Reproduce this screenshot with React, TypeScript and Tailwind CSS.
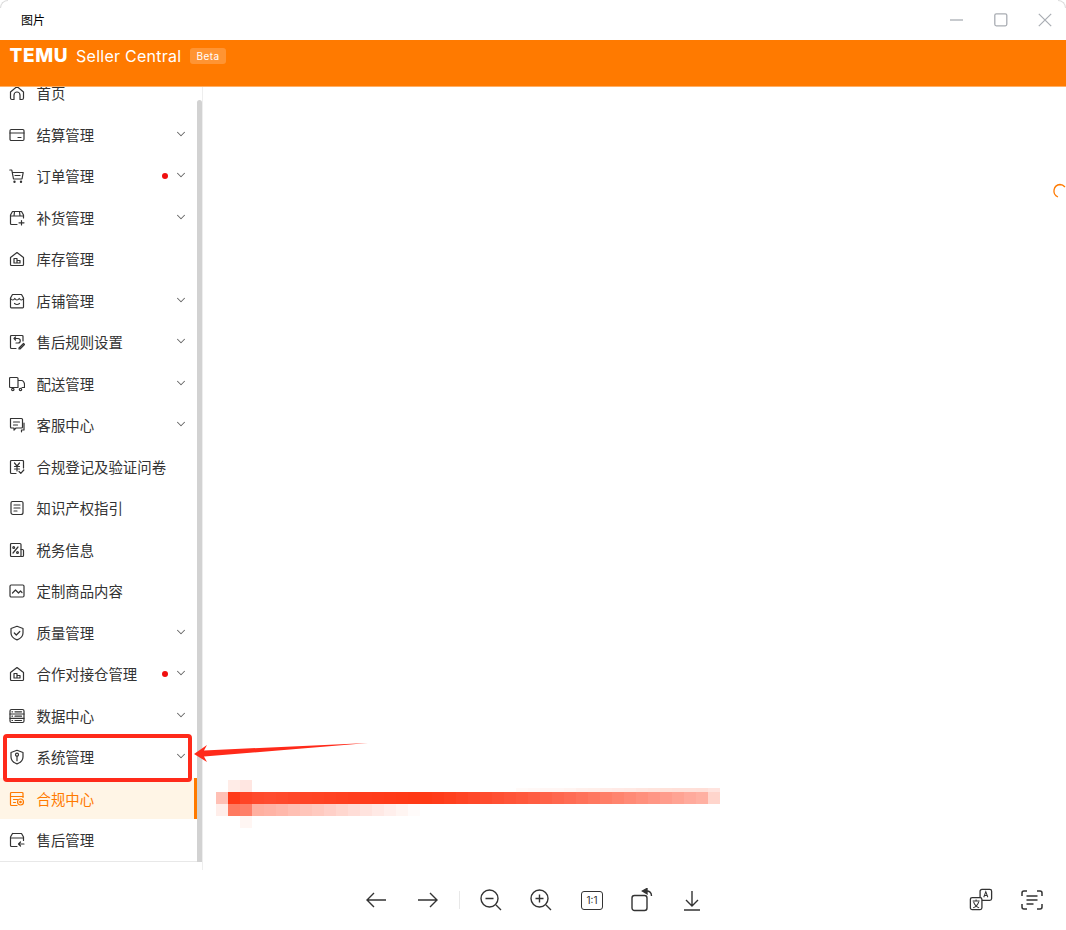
import type { ReactNode } from "react";
import { ChevronDown } from "lucide-react";

const ink = { fill: "none", stroke: "currentColor", strokeWidth: 1.2, strokeLinecap: "round", strokeLinejoin: "round" } as const;

function Ico({ children }: { children: ReactNode }) {
  return (
    <svg viewBox="0 0 16 16" className="h-4 w-4 shrink-0" {...ink}>
      {children}
    </svg>
  );
}

const icons: Record<string, ReactNode> = {
  home: <path d="M1.5 7 8 1.5 14.500 7v6a1.500 1.500 0 0 1-1.500 1.500h-2V10a3 3 0 0 0-6 0v4.500H3A1.500 1.500 0 0 1 1.500 13z" />,
  card: <><rect x="1" y="2.500" width="14" height="11" rx="1.200" /><path d="M1 6h14M9 10.500h3" /></>,
  cart: <><path d="M.8 2h2l1.700 9h8.500l1.200-6.500H3.500" /><path d="M6 7.500h5" /><circle cx="5.500" cy="13.700" r=".6" /><circle cx="12" cy="13.700" r=".6" /></>,
  box: <><path d="M14.500 8V5L12.500 1.500h-9L1.500 5v8.500a1 1 0 0 0 1 1H8" /><path d="M1.500 6h13M5.500 1.500 5 6M10.500 1.500 11 6M12.500 10.500v4.500M10 12.800h5" /></>,
  stock: <><path d="M1.500 6.500 8 1.500l6.500 5v7a1 1 0 0 1-1 1h-11a1 1 0 0 1-1-1z" /><path d="M5 12V7.500h3V12M8 9.500h3V12H5" /></>,
  shop: <><path d="M3.500 1.500h9L14.500 5v9a.8.8 0 0 1-.8.8H2.300a.8.8 0 0 1-.8-.8V5z" /><path d="M1.500 5.500c1.500 2 3 2 4.300 0 1.300 2 3 2 4.400 0 1.300 2 2.800 2 4.300 0M5.500 10.500c1.500 1.200 3.500 1.200 5 0" /></>,
  rule: <><path d="M14 7V2.500a1 1 0 0 0-1-1H2.500a1 1 0 0 0-1 1v11a1 1 0 0 0 1 1H7" /><path d="M5 4.500h4a2 2 0 0 1 0 4.500H7M6.500 3 5 4.500 6.500 6M10 14l4.500-4.500 1 1L11 15h-1z" /></>,
  truck: <><path d="M9 11.500H1.500a1 1 0 0 1-1-1V2.500a1 1 0 0 1 1-1H8a1 1 0 0 1 1 1v9zM9 4.500h3.500c1.500 0 3 2 3 4v3H13" /><circle cx="3.800" cy="13.500" r="1.200" /><circle cx="11.500" cy="13.500" r="1.200" /></>,
  chat: <><path d="M1.500 1.500h11a1 1 0 0 1 1 1V10a1 1 0 0 1-1 1H7l-2 2v-2H2.500a1 1 0 0 1-1-1z" /><path d="M4.500 5h6M4.500 8h4M15 6v7h-2.500v1.800" /></>,
  yen: <><path d="M14.500 9V2.500a1 1 0 0 0-1-1h-11a1 1 0 0 0-1 1v11a1 1 0 0 0 1 1H7" /><path d="m5.500 4 2.500 3 2.500-3M5.500 7.500h5M5.500 10h5M8 7v5M10 12.500l1.800 1.800 3-3.300" /></>,
  doc: <><path d="M2 3a1.500 1.500 0 0 1 1.500-1.500h9A1.500 1.500 0 0 1 14 3v9.500A2 2 0 0 1 12 14.500H4A2 2 0 0 1 2 12.500z" /><path d="M5 5h6M5 8h6M5 11h3" /></>,
  tax: <><rect x="1.500" y="1.500" width="10.500" height="13" rx="1" /><path d="m4 11 5-6" /><circle cx="4.700" cy="5.500" r=".9" /><circle cx="8.500" cy="10.500" r=".9" /><path d="M12 7.500h1.500a1 1 0 0 1 1 1v5a1 1 0 0 1-1 1H12" /></>,
  image: <><rect x="1" y="2" width="14" height="12" rx="1.200" /><path d="m3.500 10 3-3 3 3 2-2 1.500 1.500" /></>,
  shield: <><path d="M8 1.300 14 3.500V8c0 3.300-2.500 5.600-6 6.900C4.500 13.600 2 11.300 2 8V3.500z" /><path d="m5.300 8 2 2 3.500-3.500" /></>,
  data: <><rect x="1" y="1.500" width="14" height="13" rx="1.500" /><path d="M1 6h14M1 10.300h14M6 3.800h6.500M6 8.200h6.500M6 12.500h6.500M3 3.800h.5M3 8.200h.5M3 12.500h.5" /></>,
  key: <><path d="M8 1.300 14 3.500V8c0 3.300-2.500 5.600-6 6.900C4.500 13.600 2 11.300 2 8V3.500z" /><circle cx="8" cy="5.700" r="1.500" /><path d="M8 7.200v4.500" /></>,
  comply: <><path d="M14 6.500V2.500a1 1 0 0 0-1-1H2.500a1 1 0 0 0-1 1v11a1 1 0 0 0 1 1H8" /><path d="M1.500 5.500h12.500M4.500 8.500h4M4.500 11.500h2" /><circle cx="11.500" cy="11" r="3" /><circle cx="11.500" cy="11" r=".7" /></>,
  refund: <><path d="M3.500 1.500h9L14.500 5v3.500M1.500 5v8.500a1 1 0 0 0 1 1H8M3.500 1.500 1.500 5v1h13" /><path d="M15 12H9.500M11.500 10l-2 2 2 2" /></>,
};

const menu = [
  { name: "首页", icon: "home" },
  { name: "结算管理", icon: "card", more: true },
  { name: "订单管理", icon: "cart", more: true, dot: true },
  { name: "补货管理", icon: "box", more: true },
  { name: "库存管理", icon: "stock" },
  { name: "店铺管理", icon: "shop", more: true },
  { name: "售后规则设置", icon: "rule", more: true },
  { name: "配送管理", icon: "truck", more: true },
  { name: "客服中心", icon: "chat", more: true },
  { name: "合规登记及验证问卷", icon: "yen" },
  { name: "知识产权指引", icon: "doc" },
  { name: "税务信息", icon: "tax" },
  { name: "定制商品内容", icon: "image" },
  { name: "质量管理", icon: "shield", more: true },
  { name: "合作对接仓管理", icon: "stock", more: true, dot: true },
  { name: "数据中心", icon: "data", more: true },
  { name: "系统管理", icon: "key", more: true },
  { name: "合规中心", icon: "comply", active: true },
  { name: "售后管理", icon: "refund" },
];

// pixelated smear, one row of 12px cells each
const mosaic = [
  ["#fff", "#ffece7", "#ffe6e1", ...Array(22).fill("#fff"), "#fffaf8", "#fff8f6", "#fff6f4", "#fff6f4", "#fff4f1", "#fff0ec", "#ffefea", "#ffece8", "#ffeae6", "#ffe9e4", "#ffe6e0", "#ffe4dd", "#ffe2da", "#ffe0d9", "#ffe0d9", "#ffdfd8", "#ffe4df"],
  ["#ffc0b5", "#ff3a18", "#ff4526", "#ff4a2c", "#ff4c2f", "#ff4a2c", "#ff4729", "#ff4526", "#ff4424", "#ff4222", "#ff4020", "#ff3e1e", "#ff3c1c", "#ff3b1a", "#ff3a18", "#ff3916", "#ff3814", "#ff3a16", "#ff3c1a", "#ff401e", "#ff4424", "#ff4829", "#ff4c2e", "#ff5033", "#ff5438", "#ff583c", "#ff5d42", "#ff6248", "#ff674e", "#ff6c54", "#ff725a", "#ff7860", "#ff7e67", "#ff846e", "#ff8a76", "#ff907d", "#ff9685", "#ff9c8c", "#ffa393", "#ffaa9c", "#ffb0a2", "#ffd5cc"],
  ["#ffeeea", "#ff7a60", "#ff7f68", "#ffb0a0", "#ffb3a5", "#ffb8ab", "#ffbfb3", "#ffc5ba", "#ffcac0", "#ffd0c8", "#ffd7cf", "#ffddd7", "#ffe3de", "#ffe9e5", "#ffefec", "#fff5f2", "#fffbfa"],
  ["#fff", "#fff", "#fff6f3"],
];

export default function App() {
  return (
    <div className="relative flex h-[930px] w-[1066px] flex-col overflow-hidden bg-white font-['Noto_Sans_CJK_SC','Noto_Sans',sans-serif]">
      {/* Title bar */}
      <div className="flex h-10 shrink-0 items-center pl-[21px] text-[12px] text-black">
        <span>图片</span>
        <div className="ml-auto flex items-center gap-[30px] pr-[14px] text-[#a9adb3]">
          <svg viewBox="0 0 14 14" className="h-[14px] w-[14px]" fill="none" stroke="currentColor" strokeWidth="1.3">
            <path d="M0 7h13" />
          </svg>
          <svg viewBox="0 0 14 14" className="h-[14px] w-[14px]" fill="none" stroke="currentColor" strokeWidth="1.3">
            <rect x=".8" y=".8" width="12" height="12" rx="1.500" />
          </svg>
          <svg viewBox="0 0 14 14" className="h-[14px] w-[14px]" fill="none" stroke="currentColor" strokeWidth="1.2">
            <path d="m.8.8 12.400 12.400M13.200.8.8 13.200" />
          </svg>
        </div>
      </div>

      {/* Seller header */}
      <div className="flex h-[47px] shrink-0 items-start border-b border-[#ffb066] bg-[#ff7a00] pt-[6px] pl-[9.5px] font-['Inter',sans-serif] text-white">
        <span className="text-[19px] leading-[20px] font-extrabold tracking-[0.6px]">TEMU</span>
        <span className="ml-[8px] text-[16px] leading-[20px] tracking-[0.25px]">Seller Central</span>
        <span className="ml-[9px] mt-[2px] rounded-[3px] bg-white/20 px-[6px] text-[10px] leading-[16px] tracking-[0.5px]">Beta</span>
      </div>

      {/* Body */}
      <div className="flex min-h-0 flex-1">
        <aside className="relative h-full w-[203px] shrink-0 overflow-hidden border-r border-[#eeeeee]">
          <div className="-mt-[14.75px] w-[197px]">
            {menu.map((item) => (
              <div
                key={item.name}
                className={
                  item.active
                    ? "flex h-[41.5px] items-center border-r-[3px] border-[#ff7a00] bg-[#fff5e6] pl-[9px] text-[14.4px] text-[#ff7a00]"
                    : "flex h-[41.5px] items-center pl-[9px] text-[14.4px] text-[#333333]"
                }
              >
                <Ico>{icons[item.icon]}</Ico>
                <span className="ml-[11.5px] whitespace-nowrap">{item.name}</span>
                {item.dot && <span className="ml-auto h-[6px] w-[6px] rounded-full bg-[#f00f0f]" />}
                {item.more && (
                  <ChevronDown
                    size={14}
                    strokeWidth={1.8}
                    className={item.dot ? "ml-[6.5px] mr-[9px] -translate-y-px text-[#666666]" : "ml-auto mr-[9px] -translate-y-px text-[#666666]"}
                  />
                )}
              </div>
            ))}
            <div className="w-[202px] border-t border-[#e8e8e8]" />
          </div>
          {/* scrollbar thumb */}
          <div className="absolute top-[13px] right-0 bottom-[8px] w-[5px] rounded-t-[3px] bg-[#d2d2d2]" />
        </aside>

        <main className="relative flex-1 overflow-hidden">
          {/* loading spinner */}
          <svg viewBox="0 0 16 16" className="absolute top-[96px] left-[849px] h-4 w-4 text-[#ff7a00]" fill="none" stroke="currentColor" strokeWidth="1.3">
            <path d="M6 14A6.500 6.500 0 0 1 8 1.500c2 0 3.500.8 5 2.500" />
          </svg>
          {/* redacted smear */}
          <div className="absolute top-[693px] left-[13px]">
            {mosaic.map((row, i) => (
              <div key={i} className="flex h-[12px]">
                {row.map((c: string, j: number) => (
                  <div key={j} className={i === 0 && j > 20 ? "h-[4px] w-[12px] self-end" : "h-[12px] w-[12px]"} style={{ backgroundColor: c }} />
                ))}
              </div>
            ))}
          </div>
        </main>
      </div>

      {/* Image viewer toolbar */}
      <div className="flex h-[60px] shrink-0 items-center pl-[364px] text-[#333333]">
        <svg viewBox="0 0 24 24" className="h-6 w-6" fill="none" stroke="currentColor" strokeWidth="1.4">
          <path d="M22 12H3M10 5l-7 7 7 7" />
        </svg>
        <svg viewBox="0 0 24 24" className="ml-[28px] h-6 w-6" fill="none" stroke="currentColor" strokeWidth="1.4">
          <path d="M2 12h19M14 5l7 7-7 7" />
        </svg>
        <div className="ml-[19px] h-[18px] w-px bg-[#e8e8e8]" />
        <svg viewBox="0 0 24 24" className="ml-[19px] h-6 w-6" fill="none" stroke="currentColor" strokeWidth="1.4">
          <circle cx="10.500" cy="10.500" r="8.500" />
          <path d="M6.500 10.500h8M17 17l5 5" />
        </svg>
        <svg viewBox="0 0 24 24" className="ml-[26px] h-6 w-6" fill="none" stroke="currentColor" strokeWidth="1.4">
          <circle cx="10.500" cy="10.500" r="8.500" />
          <path d="M6.500 10.500h8M10.500 6.500v8M17 17l5 5" />
        </svg>
        <div className="ml-[28px] flex h-[19px] w-[22px] items-center justify-center rounded-[3px] border-[1.5px] border-[#333333] text-[10px] leading-none font-['Inter',sans-serif]">
          1:1
        </div>
        <svg viewBox="0 0 24 24" className="ml-[28px] h-6 w-6" fill="none" stroke="currentColor" strokeWidth="1.4">
          <rect x="1" y="7.500" width="15" height="15" rx="2.500" />
          <path d="M20.500 8c0-3-2-5-5-5" />
          <path d="M16 .5 11.500 3l4.500 2.700z" fill="currentColor" />
        </svg>
        <svg viewBox="0 0 24 24" className="ml-[25px] h-6 w-6" fill="none" stroke="currentColor" strokeWidth="1.4">
          <path d="M12 3v15M6 12l6 6 6-6M4 22h16" />
        </svg>
        <svg viewBox="0 0 26 26" className="ml-[265px] h-6 w-6" fill="none" stroke="currentColor" strokeWidth="1.4">
          <rect x="12" y="1.500" width="12.500" height="12" rx="2" />
          <rect x="1.500" y="10.500" width="12.500" height="13" rx="2" fill="white" />
          <path d="m16 10 2.200-6 2.200 6M17 8h2.500M4 14h7.500M7.700 12.500V14M5 15c.8 3 2.500 5 6 6.500M10.500 15c-.8 3-2.500 5-6 6.500" strokeWidth="1.1" />
        </svg>
        <svg viewBox="0 0 24 24" className="ml-[27px] h-6 w-6" fill="none" stroke="currentColor" strokeWidth="1.5">
          <path d="M7 3H4a2 2 0 0 0-2 2v3M17 3h3a2 2 0 0 1 2 2v3M7 21H4a2 2 0 0 1-2-2v-3M17 21h3a2 2 0 0 0 2-2v-3M6.500 8h11M6.500 12h11M6.500 16h7" />
        </svg>
      </div>

      {/* Window corners */}
      <div className="absolute top-0 left-0 h-2 w-2 rounded-tl-[8px] border-t border-l border-[#dddddd]" />
      <div className="absolute top-0 right-0 h-2 w-2 rounded-tr-[8px] border-t border-r border-[#dddddd]" />

      {/* Annotation: red box and arrow drawn on top of the screenshot */}
      <div className="absolute top-[734px] left-[3px] h-[48px] w-[189px] rounded-[4px] border-[4px] border-[#ff2a1a]" />
      <svg viewBox="0 0 1066 930" className="pointer-events-none absolute inset-0 h-[930px] w-[1066px]">
        <path d="M194 754 207 745 204 750.500 368 743 204 756.500 207 762z" fill="#ff2a1a" />
      </svg>
    </div>
  );
}
